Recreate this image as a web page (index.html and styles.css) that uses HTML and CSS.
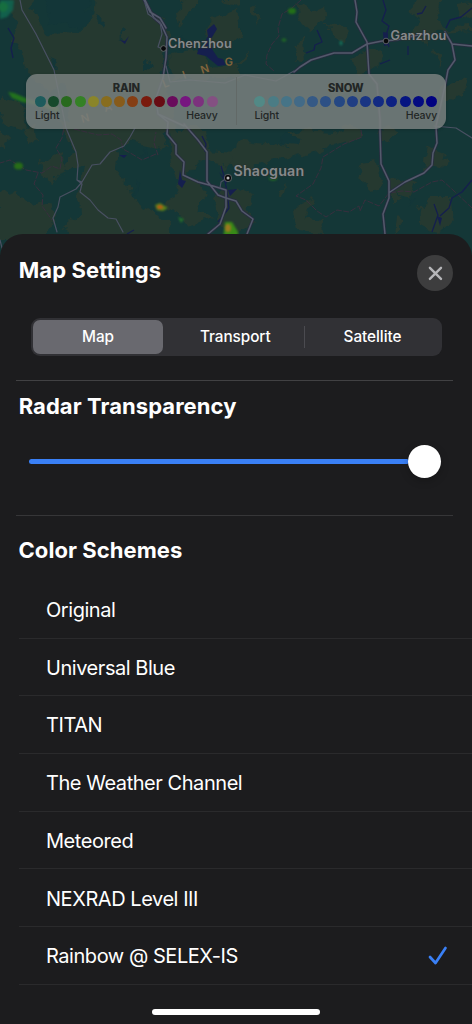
FILE: index.html
```html
<!DOCTYPE html>
<html lang="en">
<head>
<meta charset="utf-8">
<title>Map Settings</title>
<link rel="stylesheet" href="styles.css">
</head>
<body>
<main class="screen">
  <svg class="map" viewBox="0 0 472 264" aria-hidden="true">
    <defs>
      <filter id="rough" x="-5%" y="-5%" width="110%" height="110%" color-interpolation-filters="sRGB">
        <feTurbulence type="fractalNoise" baseFrequency="0.07" numOctaves="4" seed="8"/>
        <feDisplacementMap in="SourceGraphic" scale="15" xChannelSelector="R" yChannelSelector="G"/>
      </filter>
      <filter id="soft" x="-50%" y="-50%" width="200%" height="200%" color-interpolation-filters="sRGB"><feGaussianBlur stdDeviation="1.1"/></filter>
    </defs>
    <rect width="472" height="264" fill="#143737"/>
    <g class="land" filter="url(#rough)">
      <path d="M14 -5H30L32 14 46 32 76 35 92 20 94 -5H146L150 12 166 26 168 40 162 74 172 100 178 130H74L66 112 62 84 50 92 34 78 22 62 12 40 18 22 8 10Z"/>
      <path d="M174 10 188 -5H202L186 18 178 30ZM210 20 236 10 240 36 228 50 212 48 206 34ZM170 54 194 48 210 66 240 62V78H172ZM222 0H238V8Z"/>
      <path d="M0 96 20 104 28 130 8 124 0 116ZM60 122 90 126 124 122 158 130 166 150 130 142 118 150 116 170 130 188 136 205 166 220 172 240H84L62 228 80 212 78 184 84 168 64 166 74 150 68 140ZM-3 196 16 192 30 204 50 200 56 216 40 240H-3ZM26 130 34 126 36 142 28 144ZM40 162 62 152 66 166 54 184 44 178ZM-2 132 10 138 4 150 -2 148Z"/>
      <path d="M168 128H204L208 150 240 152 226 168 198 160 188 172 206 190 198 210 216 218 190 226 168 204 180 180 172 164ZM212 194 236 186 256 194 244 210 254 222 236 236 220 222Z"/>
      <path d="M236 140 276 146 302 130 330 132 354 124 362 136 320 150 290 158 264 162 248 174 230 164Z"/>
      <path d="M296 2 310 12 326 4 328 22 310 30 300 18ZM328 24 346 26 344 42 330 38ZM350 60 364 50 380 48 384 60 372 70 358 72ZM408 10 420 -2H444L436 18 446 28 472 24V30L440 32 426 44 412 34 418 18ZM440 86 462 78 468 88 450 100 438 98ZM456 4 474 2V18L462 16ZM434 50 442 56 436 66Z"/>
      <path d="M384 126 398 132 392 142 378 138ZM428 146 444 154 440 170 424 168ZM362 162 376 160 382 182 372 190 358 178ZM394 176 414 182 408 196 388 192ZM292 208 314 198 306 218 328 220 320 232 296 230ZM430 198 450 198 452 222 438 232 416 226 420 206ZM392 190 402 198 390 206ZM396 214 404 222 394 236ZM278 190 286 184 284 200Z"/>
      <path d="M330 84 346 82 350 94 336 98ZM294 48 304 38 306 60 296 64ZM252 8 258 4 256 24ZM240 64 248 52 246 64Z"/>
    </g>
    <g class="ridge" filter="url(#rough)">
      <path d="M46 -4H92L84 10 94 16 86 24 76 30 64 22 50 26ZM96 16 106 20 102 28ZM120 28 126 30 122 40ZM50 56 58 68 54 72ZM146 146 148 160 140 158ZM134 178 140 184 132 194ZM144 58 152 66 144 72ZM180 36 188 42 182 50ZM284 136 302 138 298 146 280 144ZM408 196 416 200 412 206Z"/>
    </g>
    <g class="borders">
      <path d="M301 0 292 8 282 14 278 28 279 36 272 44 267 55 266 64 274 71M65 122 62 138 56 148 62 158 60 169 52 166 42 173 26 170 10 160 0 163M38 173 34 184 43 195 42 206 52 220M74 129 98 135 112 134 121 140 123 149 132 154 142 160 156 154 158 155 154 143 156 132"/>
      <path d="M361 130 362 137 344 144 323 157 321 168 313 184 296 196 306 200 317 211 326 217 337 210 349 212 359 206 360 211 365 200 379 206 389 193 402 191 414 192 432 182 442 180 453 190 472 208"/>
    </g>
    <g class="water">
      <path d="M383 0 386 10 382 21 389 26 386 35 389 47M446 28 450 20 461 17 472 8M317 30 321 39 322 42 315 45 314 50 306 53M426 6 422 13 417 14M8 28 14 38 11 48 13 58M408 46 408 55M434 204 438 215 432 232M440 216 449 208 452 198 462 192 472 180M202 136 206 144 205 152M221 166 224 176 227 192 229 208 218 222M127 234 134 230M390 60 380 64"/>
      <path class="lake" d="M214 24 217 29 211 39 212 49 218 58 223 59 226 65 218 66 206 56 197 54 199 47 203 46 208 36 207 30ZM180 170 182 180 186 181 182 188 178 184ZM120 40 125 44 129 36 125 41ZM119 155 127 155 124 158ZM219 172 226 180 230 176 226 184ZM437 216 442 218 440 226ZM383 32 388 33 388 45 384 46ZM228 190 237 189 230 196Z"/>
    </g>
    <g class="roads-casing">
      <path d="M145 0 154 18 161 24 167 37 166 58 163 78 156 98 158 114 168 122 167 134 176 145 176 154 184 162 183 175 198 182 213 186 226 190 226 207 220 224 208 234M144 0 150 12 160 18 166 28M184 124 198 140 207 152 207 181 218 195 226 198 236 201 242 211 253 219 247 234M158 114 184 126M355 0 357 12 356 22 367 42 369 74 377 84 380 120 380 132 381 164 389 181 389 198 383 214 385 234M294 72 300 67 311 60 334 53 352 53 367 44 382 41 396 40 423 34M452 44 472 46M445 32 452 44 455 60 448 70 445 86 436 126 437 143 433 153 432 165 424 173 405 182 390 192"/>
    </g>
    <g class="roads">
      <path d="M145 0 154 18 161 24 167 37 166 58 163 78 156 98 158 114 168 122 167 134 176 145 176 154 184 162 183 175 198 182 213 186 226 190 226 207 220 224 208 234M144 0 150 12 160 18 166 28M184 124 198 140 207 152 207 181 218 195 226 198 236 201 242 211 253 219 247 234M158 114 184 126M355 0 357 12 356 22 367 42 369 74 377 84 380 120 380 132 381 164 389 181 389 198 383 214 385 234M294 72 300 67 311 60 334 53 352 53 367 44 382 41 396 40 423 34M452 44 472 46M445 32 452 44 455 60 448 70 445 86 436 126 437 143 433 153 432 165 424 173 405 182 390 192"/>
      <path class="minor" d="M20 0 22 10 36 34 54 70 66 128 76 152 78 165 77 180 82 184 80 192 90 200 98 210 108 218 116 219 123 232M135 128 130 137 124 146 110 152 100 164 92 165 82 182 76 189 60 197 58 207 53 218 57 232M77 180 82 182M163 49 158 47 162 34 160 22 148 14 145 3M166 66 170 82 190 80 225 83 245 75 276 81 294 71M220 188 221 182 227 178M434 126 456 128 472 138M0 240 3 252"/>
    </g>
    <g filter="url(#soft)">
      <path d="M0 0H14L13 10 7 17 0 19Z" fill="#12604c"/><ellipse cx="3" cy="7" rx="5" ry="5" fill="#176e40"/>
      <path d="M8 92 14 93 28 99 60 107 58 113 40 106 22 102 12 98Z" fill="#23721d"/><path d="M28 100 56 106 58 111Z" fill="#61741d"/>
      <ellipse cx="18.500" cy="166" rx="4.500" ry="3.600" fill="#286d18"/>
      <ellipse cx="292" cy="11" rx="4" ry="3" fill="#237018"/><ellipse cx="284" cy="40" rx="2.500" ry="1.800" fill="#206527"/>
      <path d="M155 205 160 203 168 208 163 211 157 210Z" fill="#5b8119"/><ellipse cx="160" cy="207" rx="3" ry="2" fill="#b45b16"/>
      <path d="M178 217 184 219 181 223Z" fill="#26722a"/><path d="M225 222 232 222 238 232V240H223Z" fill="#388a17"/><ellipse cx="228" cy="228" rx="3" ry="4" fill="#9c7820"/>
      <ellipse cx="273" cy="178" rx="4" ry="2.500" fill="#247022"/><ellipse cx="341" cy="43" rx="1.500" ry="2.500" fill="#157057"/>
    </g>
    <g class="pins"><circle cx="163.500" cy="48.500" r="2.800"/><circle cx="386" cy="41" r="2.800"/><circle cx="228" cy="178" r="3.700"/><circle class="pin-core" cx="228" cy="178" r="1.500"/></g>
    <g class="region-name">
      <text transform="translate(82 123) rotate(-15)">N</text><text transform="translate(105 112) rotate(-15)">A</text><text transform="translate(164 88) rotate(-20)">L</text><text transform="translate(184 79) rotate(-20)">I</text><text transform="translate(202 74) rotate(-18)">N</text><text transform="translate(225 66) rotate(-5)">G</text>
    </g>
    <g class="city-names"><text class="city-a" x="168" y="48">Chenzhou</text><text class="city-b" x="390.500" y="40">Ganzhou</text><text class="city-c" x="233.500" y="176">Shaoguan</text></g>
  </svg>

  <section class="legend" aria-label="Precipitation legend">
    <div class="scale">
      <h3>RAIN</h3>
      <div class="dots"><i class="r1"></i><i class="r2"></i><i class="r3"></i><i class="r4"></i><i class="r5"></i><i class="r6"></i><i class="r7"></i><i class="r8"></i><i class="r9"></i><i class="r10"></i><i class="r11"></i><i class="r12"></i><i class="r13"></i><i class="r14"></i></div>
      <div class="ends"><span>Light</span><span>Heavy</span></div>
    </div>
    <div class="scale">
      <h3>SNOW</h3>
      <div class="dots"><i class="s1"></i><i class="s2"></i><i class="s3"></i><i class="s4"></i><i class="s5"></i><i class="s6"></i><i class="s7"></i><i class="s8"></i><i class="s9"></i><i class="s10"></i><i class="s11"></i><i class="s12"></i><i class="s13"></i><i class="s14"></i></div>
      <div class="ends"><span>Light</span><span>Heavy</span></div>
    </div>
  </section>

  <section class="sheet">
    <header class="sheet-head">
      <h1>Map Settings</h1>
      <button class="close" aria-label="Close"><svg viewBox="0 0 36 36"><path d="M12.900 12.800 24 23.900M24 12.800 12.900 23.900"/></svg></button>
    </header>
    <div class="segments">
      <button class="segment selected">Map</button><button class="segment">Transport</button><button class="segment divided">Satellite</button>
    </div>
    <section class="radar">
      <h2>Radar Transparency</h2>
      <div class="slider"><div class="track"></div><div class="thumb"></div></div>
    </section>
    <section class="schemes">
      <h2 class="schemes-title">Color Schemes</h2>
      <ul>
        <li><span>Original</span></li>
        <li><span>Universal Blue</span></li>
        <li><span>TITAN</span></li>
        <li><span>The Weather Channel</span></li>
        <li><span>Meteored</span></li>
        <li><span>NEXRAD Level III</span></li>
        <li><span>Rainbow @ SELEX-IS</span><svg class="check" viewBox="0 0 20 20"><path d="M2 11 7.500 17 17.500 2"/></svg></li>
      </ul>
    </section>
    <div class="home-bar"></div>
  </section>
</main>
</body>
</html>
```
FILE: styles.css
```css
* { box-sizing: border-box; }
body { margin: 0; background: #1c1c1e; font-family: Inter, "Liberation Sans", sans-serif; color: #fff; }
h1, h2, h3, ul { margin: 0; padding: 0; }
button { border: 0; padding: 0; font: inherit; color: inherit; background: none; }
.screen { display: grid; grid-template-rows: 73.500px 55px 105px 790.500px; width: 472px; height: 1024px; overflow: hidden; }
.map { grid-area: 1 / 1 / 5 / 2; width: 472px; height: 264px; }
.land { fill: #253930; }
.ridge { fill: #133638; }
.borders { fill: none; stroke: #382f3e; stroke-width: 1; stroke-dasharray: 6 1.5; }
.water { fill: none; stroke: #151f4e; stroke-width: 1.3; stroke-linejoin: round; }
.lake { fill: #151f4e; stroke: none; }
.roads-casing, .roads { fill: none; stroke-linejoin: round; stroke-linecap: round; }
.roads-casing { stroke: #292d41; stroke-width: 3; }
.roads { stroke: #535a6b; stroke-width: 1.5; }
.roads .minor { stroke: #495062; stroke-width: 1.2; }
.pins { fill: #08090b; stroke: #777b7d; stroke-width: .7; }
.pins .pin-core { fill: #bbb; stroke: none; }
.region-name { font-size: 11px; font-weight: 600; fill: #80643c; }
.city-names { font-weight: 600; fill: #868a8c; stroke: #26302f; stroke-width: 1.2px; paint-order: stroke; }
.city-a, .city-b { font-size: 12.700px; }
.city-a { letter-spacing: .12px; }
.city-b { letter-spacing: .15px; }
.city-c { font-size: 14.200px; letter-spacing: .22px; }

.legend { grid-area: 2 / 1; z-index: 1; width: 420.500px; margin-left: 25.700px; border-radius: 11px; display: grid; grid-template-columns: 210px 1fr; background: linear-gradient(#626967, #626967) 210px 50% / 1px 48px no-repeat rgba(120, 127, 126, .86); color: #222625; box-shadow: 0 1px 3px rgba(0, 0, 0, .2); }
.scale { padding: 8.500px 18px 0 9.300px; }
.scale + .scale { padding: 8.500px 9px 0 18.700px; }
.scale h3 { font-size: 11.200px; line-height: 12px; font-weight: 800; text-align: center; letter-spacing: -.15px; }
.dots { display: flex; justify-content: space-between; padding-top: 2px; }
.dots i { width: 11px; height: 11px; border-radius: 50%; }
.ends { display: flex; justify-content: space-between; font-size: 10.500px; line-height: 14px; padding-top: 2px; font-weight: 500; letter-spacing: -.1px; }
.r1 { background: #1d5b5c; } .r2 { background: #17492b; } .r3 { background: #286a1e; } .r4 { background: #348126; } .r5 { background: #8a852a; } .r6 { background: #886d1e; } .r7 { background: #875b1b; }
.r8 { background: #853e14; } .r9 { background: #7a1a0d; } .r10 { background: #670b13; } .r11 { background: #690b5c; } .r12 { background: #771680; } .r13 { background: #7c327d; } .r14 { background: #845082; }
.s1 { background: #528986; } .s2 { background: #4b7c85; } .s3 { background: #467487; } .s4 { background: #426a87; } .s5 { background: #355985; } .s6 { background: #2d5085; } .s7 { background: #244783; }
.s8 { background: #203e83; } .s9 { background: #193583; } .s10 { background: #122a82; } .s11 { background: #0d2182; } .s12 { background: #061581; } .s13 { background: #030b80; } .s14 { background: #000180; }

.sheet { grid-area: 4 / 1; z-index: 1; display: flex; flex-direction: column; background: #1c1c1e; border-radius: 23px 23px 0 0; }
.sheet-head { display: flex; justify-content: space-between; align-items: flex-start; height: 84px; padding: 21.500px 19.500px 0 18.700px; }
h1, h2 { font-size: 22px; line-height: 32px; font-weight: 650; letter-spacing: .06px; }
h1 { line-height: 31px; letter-spacing: .12px; }
.close { width: 36px; height: 36px; border-radius: 50%; background: #3d3d3e; }
.close svg { display: block; }
.close path { stroke: #b6b6b9; stroke-width: 2.4; stroke-linecap: round; }
.segments { display: grid; grid-template-columns: 132px 1fr 136px; height: 38.500px; margin: 0 30.500px 0 31px; padding: 2px; border-radius: 9px; background: #313135; }
.segment { font-size: 15.300px; font-weight: 450; letter-spacing: -.05px; padding-left: 2px; }
.selected { background: #69696f; border-radius: 7px; margin-right: 2px; padding-left: 0; }
.divided { background: linear-gradient(#4b4b50, #4b4b50) 0 50% / 1px 22px no-repeat; }
.radar { height: 135.500px; margin: 24px 19.500px 0 16px; border-top: 1px solid #414143; border-bottom: 1.500px solid #363638; padding: 9px 0 0 2.700px; }
.slider { display: flex; align-items: center; height: 33px; width: 413px; margin: 22.700px 0 0 10.300px; }
.track { width: 380px; height: 5px; border-radius: 3px; background: #3a80f6; }
.thumb { width: 33px; height: 33px; margin-left: -.500px; border-radius: 50%; background: #fff; box-shadow: 0 3px 8px rgba(0, 0, 0, .22); }
.schemes { padding: 18.500px 0 0 19px; }
.schemes-title { margin: 0 0 15px -.5px; }
.schemes ul { list-style: none; }
.schemes li { display: flex; align-items: center; height: 57.700px; padding: 1.500px 24px 0 27px; border-bottom: 1px solid #2a2a2c; font-size: 20px; font-weight: 400; letter-spacing: -.45px; }
.check { width: 20px; height: 20px; margin-left: auto; }
.check path { fill: none; stroke: #3a80f6; stroke-width: 2.7; stroke-linecap: round; stroke-linejoin: round; }
.home-bar { width: 168px; height: 6px; margin: 24px auto 0 152px; border-radius: 3px; background: #fff; }
```
